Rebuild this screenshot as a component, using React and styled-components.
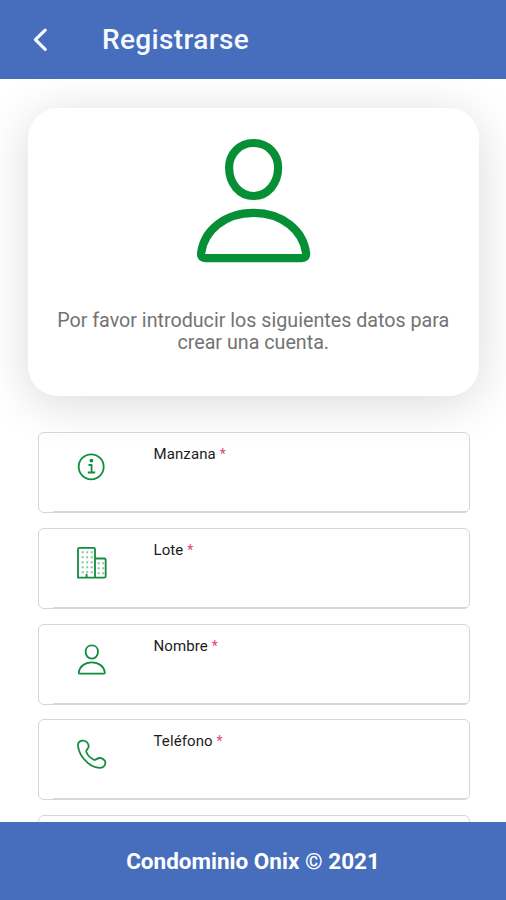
import styled, { createGlobalStyle } from 'styled-components'

const campos = [
    { nombre: 'Manzana', icono: IconoInfo },
    { nombre: 'Lote', icono: IconoEdificio },
    { nombre: 'Nombre', icono: IconoPersona },
    { nombre: 'Teléfono', icono: IconoTelefono },
]

export default function App (){
    return(
        <>
            <GlobalCss />
            <PantallaCss>
                <HeaderCss>
                    <BotonAtrasCss aria-label="Atrás">
                        <svg width="16" height="26" viewBox="0 0 16 26">
                            <path d="M13.2 3.2 3.4 12.7l9.8 9.700" />
                        </svg>
                    </BotonAtrasCss>
                    <TituloCss>Registrarse</TituloCss>
                </HeaderCss>
                <ContenidoCss>
                    <TarjetaCss>
                        <AvatarCss viewBox="0 0 120 130">
                            <path d="M60.600 8c14 0 24.500 10.600 24.500 24.800C85.100 48.300 74.600 61 60.600 61S36.100 48.300 36.100 32.800C36.100 18.600 46.600 8 60.600 8z" />
                            <path d="M60.600 77.800c28.500 0 49.800 17.500 52.500 40.500.4 3.300-1.200 4.800-4.300 4.800H12.400c-3.100 0-4.700-1.500-4.300-4.800C10.800 95.300 32.100 77.800 60.600 77.800z" />
                        </AvatarCss>
                        <TextoCss>Por favor introducir los siguientes datos para crear una cuenta.</TextoCss>
                    </TarjetaCss>
                    <ListaCss>
                        {campos.map(({ nombre, icono: Icono }) => (
                            <CampoCss key={nombre}>
                                <Icono />
                                <EtiquetaCss>{nombre} <span>*</span></EtiquetaCss>
                            </CampoCss>
                        ))}
                        <CampoCss />
                    </ListaCss>
                </ContenidoCss>
                <FooterCss>Condominio Onix © 2021</FooterCss>
            </PantallaCss>
        </>
    )
}

function IconoInfo (){
    return(
        <IconoCss viewBox="0 0 32 32">
            <circle cx="15.200" cy="15.800" r="12.500" />
            <path d="M12.500 14h3.100v7.300M11.800 21.500h7.400" />
            <circle cx="15.400" cy="9.600" r="1" className="relleno" />
        </IconoCss>
    )
}

function IconoEdificio (){
    return(
        <IconoCss viewBox="0 0 32 32">
            <path d="M2 30.700V2.200Q2 .9 3.300.9h14.400q1.300 0 1.300 1.300v28.500zM19 11.500h9.200q1.500 0 1.500 1.500v16.200q0 1.500-1.500 1.500H19z" />
            <path d="M5.700 5.300h11M5.700 10.300h11M5.700 15.300h11M5.700 20.300h11M5.700 25.300h11M21.700 16.300h6.500M21.700 21.300h6.500M21.700 26.300h6.500" className="ventanas" />
            <path d="M10.600 27v3.500" />
        </IconoCss>
    )
}

function IconoPersona (){
    return(
        <IconoCss viewBox="0 0 32 32">
            <path d="M15.800 2.300c3.600 0 6.200 2.700 6.200 6.300 0 4-2.600 7-6.200 7s-6.200-3-6.200-7c0-3.600 2.600-6.300 6.200-6.300zM15.800 19.300c7.200 0 12.300 4.400 13 10 .1.900-.4 1.400-1.200 1.400H4c-.8 0-1.300-.5-1.200-1.400C3.500 23.700 8.600 19.300 15.800 19.300z" />
        </IconoCss>
    )
}

function IconoTelefono (){
    return(
        <IconoCss viewBox="0 0 32 32">
            <path d="M6.300 2.600C3.500 3 1.800 5.200 2 7.800c.6 7 4.600 12.600 9.400 16.800 4.400 3.800 9.200 5.400 13 5.200 3-.2 5-2.600 5-5.200 0-2.200-3-4.500-5.400-4.600-3.200-.1-4.200 2.600-6.200 1.700C14.600 20.100 11.300 16.400 10.300 14 9.500 11.900 13 10.600 12.700 7.800 12.300 4.800 9.500 2.200 6.300 2.600z" />
        </IconoCss>
    )
}

const GlobalCss = createGlobalStyle`
    *{
        box-sizing: border-box;
    }
    body{
        margin: 0;
        background-color: #fff;
        font-family: Roboto, sans-serif;
    }
`

const PantallaCss = styled.div`
    display: flex;
    flex-direction: column;
    height: 900px;
    overflow: hidden;
`

const HeaderCss = styled.header`
    display: flex;
    align-items: center;
    flex-shrink: 0;
    height: 79px;
    padding-left: 32px;
    background-color: #466ebc;
    color: #f6faff;
`

const BotonAtrasCss = styled.button`
    display: flex;
    width: 70px;
    padding: 1px 0 0;
    border: 0;
    background: none;

    path{
        fill: none;
        stroke: #f4f9ff;
        stroke-width: 3.2;
        stroke-linecap: round;
        stroke-linejoin: round;
    }
`

const TituloCss = styled.h1`
    margin: 0;
    font-size: 28px;
    font-weight: 500;
    letter-spacing: .35px;
    line-height: 36px;
`

const ContenidoCss = styled.main`
    flex: 1;
    min-height: 0;
    overflow: hidden;
    padding: 28.500px 28px 0;
`

const TarjetaCss = styled.section`
    display: flex;
    flex-direction: column;
    align-items: center;
    width: 450.500px;
    height: 288px;
    padding-top: 27px;
    border-radius: 30px;
    background-color: #fff;
    box-shadow: 0 7px 48px rgba(0, 0, 0, .15);
`

const AvatarCss = styled.svg`
    width: 120px;
    height: 130px;
    fill: none;
    stroke: #078f35;
    stroke-width: 8.200;
    stroke-linejoin: round;
`

const TextoCss = styled.p`
    width: 411px;
    margin: 45px 0 0;
    color: #737373;
    font-size: 19.700px;
    line-height: 22px;
    text-align: center;
`

const ListaCss = styled.div`
    display: flex;
    flex-direction: column;
    gap: 14.600px;
    padding: 36.900px 8.500px 0 9.500px;
`

const CampoCss = styled.label`
    display: flex;
    flex-shrink: 0;
    height: 81px;
    padding: 18px 0 0 37px;
    border: 1px solid #d6d6d6;
    border-radius: 6px;
    /* línea del input, separada del borde izquierdo */
    background: linear-gradient(#d9d9d9, #d9d9d9) 14px 100% / 100% 1px no-repeat;
`

const IconoCss = styled.svg`
    width: 32px;
    height: 32px;
    margin-right: 46px;
    fill: none;
    stroke: #128c3f;
    stroke-width: 1.800;
    stroke-linejoin: round;

    .relleno{
        fill: #128c3f;
    }
    .ventanas{
        stroke-width: 2;
        stroke-dasharray: 2 2.500;
        opacity: .5;
    }
`

const EtiquetaCss = styled.span`
    margin-top: -6px;
    color: #1c1c1c;
    font-size: 15px;
    letter-spacing: .1px;
    line-height: 18px;

    span{
        color: #e2476a;
        font-size: 14px;
    }
`

const FooterCss = styled.footer`
    display: flex;
    align-items: center;
    justify-content: center;
    flex-shrink: 0;
    height: 78px;
    background-color: #466ebc;
    color: #fff;
    font-size: 22.500px;
    font-weight: 700;
`
